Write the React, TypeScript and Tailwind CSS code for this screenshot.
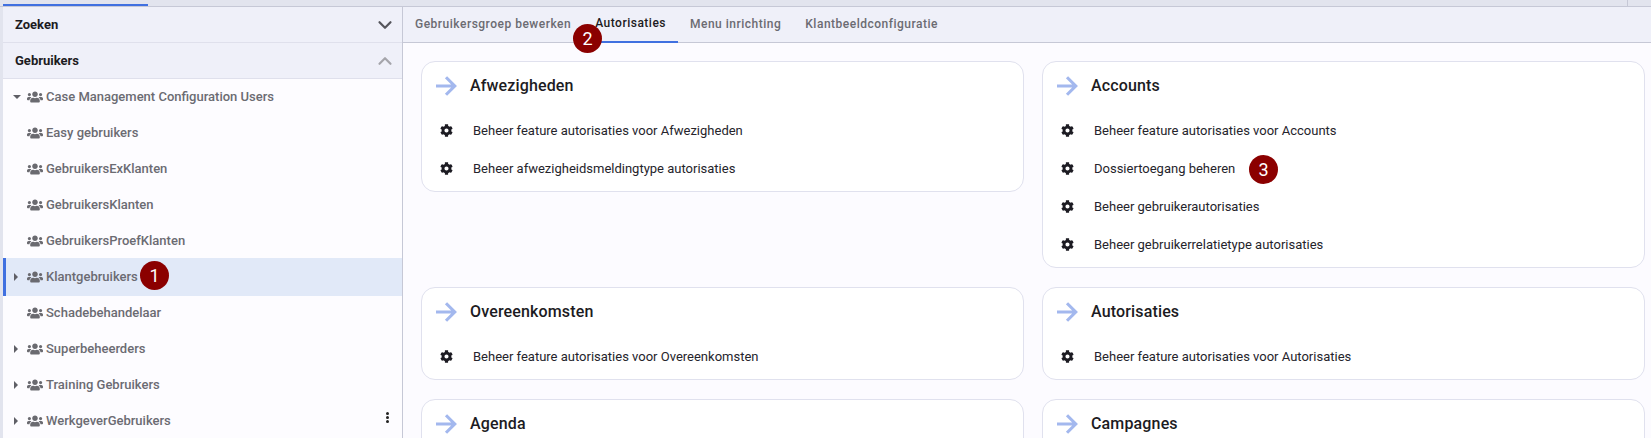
import React from "react";
import { FaUsers, FaCog } from "react-icons/fa";
import { ChevronDown, ChevronUp } from "lucide-react";

interface TreeRow {
  label: string;
  caret?: "down" | "right";
  active?: boolean;
  badge?: string;
  menu?: boolean;
}

interface CardType {
  title: string;
  links: { label: string; badge?: string }[];
}

const rows: TreeRow[] = [
  { label: "Case Management Configuration Users", caret: "down" },
  { label: "Easy gebruikers" },
  { label: "GebruikersExKlanten" },
  { label: "GebruikersKlanten" },
  { label: "GebruikersProefKlanten" },
  { label: "Klantgebruikers", caret: "right", active: true, badge: "1" },
  { label: "Schadebehandelaar" },
  { label: "Superbeheerders", caret: "right" },
  { label: "Training Gebruikers", caret: "right" },
  { label: "WerkgeverGebruikers", caret: "right", menu: true },
];

const cards: CardType[] = [
  {
    title: "Afwezigheden",
    links: [
      { label: "Beheer feature autorisaties voor Afwezigheden" },
      { label: "Beheer afwezigheidsmeldingtype autorisaties" },
    ],
  },
  {
    title: "Accounts",
    links: [
      { label: "Beheer feature autorisaties voor Accounts" },
      { label: "Dossiertoegang beheren", badge: "3" },
      { label: "Beheer gebruikerautorisaties" },
      { label: "Beheer gebruikerrelatietype autorisaties" },
    ],
  },
  { title: "Overeenkomsten", links: [{ label: "Beheer feature autorisaties voor Overeenkomsten" }] },
  { title: "Autorisaties", links: [{ label: "Beheer feature autorisaties voor Autorisaties" }] },
  // the links of these two fall below the fold
  { title: "Agenda", links: [] },
  { title: "Campagnes", links: [] },
];

const tabs = ["Gebruikersgroep bewerken", "Autorisaties", "Menu inrichting", "Klantbeeldconfiguratie"];

function Badge({ n, className }: { n: string; className: string }) {
  return (
    <span
      className={`absolute flex h-[29px] w-[29px] items-center justify-center rounded-full bg-[#8b0000] text-[18px] leading-none text-white ${className}`}
    >
      {n}
    </span>
  );
}

function Caret({ row }: { row: TreeRow }) {
  if (row.caret === "down") {
    return <span className="ml-[10px] h-0 w-0 border-x-[4px] border-t-[4px] border-x-transparent border-t-[#5f5f66]" />;
  }
  if (row.caret === "right") {
    return (
      <span
        className={`${row.active ? "ml-[8px]" : "ml-[11px]"} h-0 w-0 border-y-[4px] border-l-[4px] border-y-transparent border-l-[#5f5f66]`}
      />
    );
  }
  return null;
}

function Arrow() {
  return (
    <svg viewBox="0 0 24 24" fill="none" stroke="currentColor" strokeWidth={2.5} className="ml-[9px] h-[30px] w-[30px] shrink-0 text-[#a3b8ee]">
      <path d="M4 12h15M12 5l7 7-7 7" />
    </svg>
  );
}

function Tree() {
  return (
    <div>
      {rows.map((row) => (
        <div
          key={row.label}
          className={
            row.active
              ? "relative z-10 -my-px flex h-[38px] items-center border-l-[3px] border-[#4070e0] bg-[#e1e9f8]"
              : "relative flex h-9 items-center"
          }
        >
          <div className={`flex items-center ${row.active ? "w-[21px]" : "w-[24px]"}`}>
            <Caret row={row} />
          </div>
          <FaUsers className="h-4 w-4 shrink-0 text-[#6a6a70]" />
          <span className="ml-[3px] text-[13px] font-medium text-[#6b6b72]">{row.label}</span>
          {row.badge && <Badge n={row.badge} className="left-[134px] top-[3px]" />}
          {row.menu && (
            <span className="absolute left-[383px] top-[9px] flex flex-col gap-px">
              <i className="block h-[3px] w-[3px] rounded-full bg-[#222]" />
              <i className="block h-[3px] w-[3px] rounded-full bg-[#222]" />
              <i className="block h-[3px] w-[3px] rounded-full bg-[#222]" />
            </span>
          )}
        </div>
      ))}
    </div>
  );
}

function Card({ card }: { card: CardType }) {
  return (
    <div className="self-start rounded-[14px] border border-[#e0e1ee] bg-white pb-[3px]">
      <div className="flex h-[50px] items-center pb-[2px]">
        <Arrow />
        <h2 className="ml-[9px] text-base font-medium tracking-[0.15px] text-[#1c1b22]">{card.title}</h2>
      </div>
      {card.links.map((link) => (
        <div key={link.label} className="relative flex h-[38px] items-center">
          <FaCog className="ml-[18px] h-[13px] w-[13px] shrink-0 -translate-y-px text-[#1c1b22]" />
          <span className="ml-[20px] text-[13px] text-[#25242b]">{link.label}</span>
          {link.badge && <Badge n={link.badge} className="left-[206px] top-[5px]" />}
        </div>
      ))}
    </div>
  );
}

export default function App() {
  return (
    <div className="flex h-[438px] w-[1651px] flex-col overflow-hidden bg-[#e2e4ee] font-['Roboto',sans-serif]">
      {/* top strip with the active app tab */}
      <div className="relative flex h-[7px] shrink-0 border-b border-[#c6c8d6]">
        <div className="ml-[3px] h-[2px] w-[145px] translate-y-[4px] bg-[#4070e0]" />
        <div className="absolute left-[1627px] top-0 h-[7px] w-px bg-[#c6c8d6]" />
      </div>

      <div className="flex min-h-0 flex-1 pl-[3px]">
        {/* left panel */}
        <aside className="w-[400px] shrink-0 border-r border-[#c6c8d6] bg-[#fdfcff]">
          <div className="flex h-[36px] items-center justify-between border-b border-[#dfe0ec] bg-[#eff0f9] pl-3 pr-[6px]">
            <span className="text-[13px] font-bold text-[#1c1b22]">Zoeken</span>
            <ChevronDown className="h-[22px] w-[22px] text-[#55555c]" strokeWidth={2.4} />
          </div>
          <div className="flex h-[36px] items-center justify-between border-b border-[#dfe0ec] bg-[#eff0f9] pl-3 pr-[6px]">
            <span className="text-[13px] font-bold text-[#1c1b22]">Gebruikers</span>
            <ChevronUp className="h-[22px] w-[22px] text-[#a5a5ab]" strokeWidth={2.4} />
          </div>
          <Tree />
        </aside>

        {/* main area */}
        <main className="min-w-0 flex-1 bg-[#fcfbff]">
          <nav className="relative flex h-[36px] border-b border-[#c6c8d6] bg-[#eff0f9]">
            {tabs.map((tab, i) => (
              <div
                key={tab}
                className={
                  i === 1
                    ? "-mb-px flex items-center border-b-2 border-[#4070e0] px-3 pb-[3px] text-xs font-medium tracking-[0.5px] text-[#1c1b22]"
                    : "flex items-center px-3 pb-[2px] text-xs font-medium tracking-[0.5px] text-[#6b6b72]"
                }
              >
                {tab}
              </div>
            ))}
            <Badge n="2" className="left-[170px] top-[17px] z-10" />
          </nav>
          <div className="grid grid-cols-[603px_603px] gap-x-[18px] gap-y-[19px] pl-[18px] pt-[18px]">
            {cards.map((card) => (
              <Card key={card.title} card={card} />
            ))}
          </div>
        </main>
      </div>
    </div>
  );
}
